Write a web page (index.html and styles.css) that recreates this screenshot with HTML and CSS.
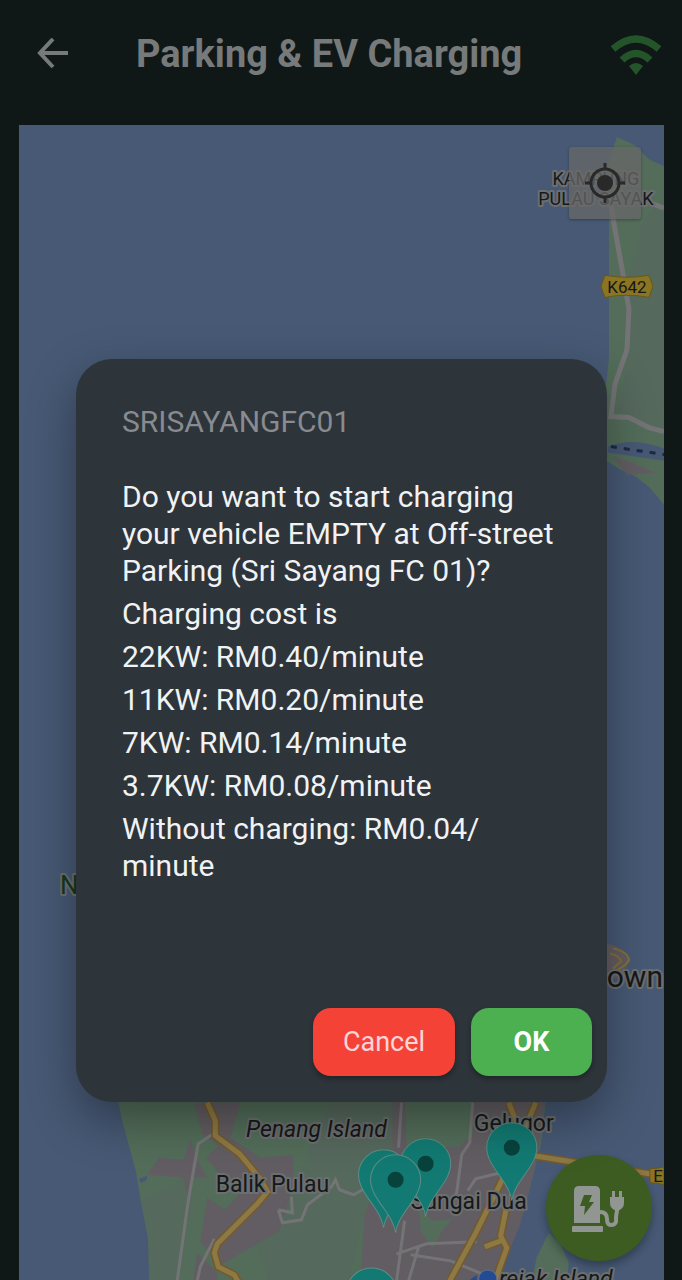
FILE: index.html
```html
<!DOCTYPE html>
<html lang="en">
<head>
  <meta charset="UTF-8">
  <meta name="viewport" content="width=device-width, initial-scale=1.0">
  <title>Parking &amp; EV Charging</title>
  <link rel="stylesheet" href="styles.css">
</head>
<body>
  <header class="app-bar">
    <button class="icon-btn" aria-label="Back">
      <svg width="32" height="32" viewBox="0 0 32 32" fill="none" stroke="#777a7a" stroke-width="4">
        <path d="M31 15H4M16 1L3 15l13 14"/>
      </svg>
    </button>
    <h1>Parking &amp; EV Charging</h1>
    <svg class="wifi" width="52" height="44" viewBox="0 0 52 44" fill="none" stroke="#24552a" stroke-width="7">
      <path d="M3 17Q26-3 49 17"/>
      <path d="M12 28Q26 15 40 28"/>
      <path d="M26 43l-7-9q7-6 14 0z" fill="#24552a" stroke="none"/>
    </svg>
  </header>

  <main class="map">
    <svg class="map-canvas" viewBox="19 125 644 1155" preserveAspectRatio="xMidYMid slice">
      <defs>
        <g id="pin">
          <path d="M0 53C-2 34-25 19-25 0A25 25 0 0 1 25 0C25 19 2 34 0 53z" fill="#127a72" stroke="#5e8c86" stroke-width="1"/>
          <circle r="8" fill="#08423d"/>
        </g>
      </defs>

      <!-- Kampung Pulau Sayak coast -->
      <path class="land" d="M616 138l18 8 14 14 15 7v338l-14-17-14-11-15-7-20-12V430l8-70V210l-2-42z"/>
      <path class="land-alt" d="M626 290l3 60-12 62 20 10 26 8V200l-20 20z"/>
      <path class="water" d="M607 447q25-10 56 2v12l-56-8z"/>
      <path class="urban" d="M612 457l20 6 22 10-28 2z"/>
      <path class="road road-wide" d="M610 205l4 25 9 50 5 30-2 40-12 35-4 32 18 1 20 10 15 4M640 200l23 9"/>
      <path class="ferry" d="M610 447l54 8"/>

      <!-- George Town tip -->
      <path class="urban" d="M600 942q24 4 29 16-3 13-15 20h-14z"/>
      <path class="highway-edge" d="M612 948q16 4 16 12-4 6-11 9M609 953q11 3 11 8l-8 7"/>

      <!-- Penang Island -->
      <path class="land" d="M116 1090l6 30 14 52 4 25 8 42 1 41h332l14-14 18-28 9-24 9-34 9-36 6-54z"/>
      <path class="land-alt" d="M330 1102h70l-2 50-30 40-20 88h-80l-15-45 40-40 20-60z"/>
      <path class="land-alt" d="M142 1200l40-22 12 10-20 92h-25l-1-41z"/>
      <path class="urban" d="M194 1102h46l-10 35 30 20 33-3v30l-14 46-58 34-21-23 7-44 17 12 14-14-32-38 12-12-16-12z"/>
      <path class="urban" d="M147 1174l12-17 24 2 7-21 6 20 11 19H192l-6 14-3-14z"/>
      <path class="urban" d="M197 1252l20 20v8h-24z"/>
      <path class="urban" d="M392 1090h12l2 56h52l14-12 2-44h72l-9 65-9 36-9 34-10 24-18 28-8 3H360l4-66 14-40 14-10z"/>
      <path class="land" d="M418 1208l14 12 20-2-12 14-8 16-12-18z"/>
      <path class="land" d="M548 1232l12 12 8 18-2 18h-35l5-24z"/>
      <path class="water" d="M139 1178l8-3-1 5-6 2z"/>

      <path class="road" d="M213 1133l-15 10-4 22-7 42-10 73M214 1238l-14 28-3 14"/>
      <path class="road" d="M278 1209l14 3-1-16M278 1209l4 13 19-3 6-15 24-18 4-7 4 10 14 5 9-5"/>
      <path class="road" d="M401 1102l-3 45M472 1102l-3 40-8 12-5 38-10 18M404 1220l-8 60M396 1253l30-10 50-2M410 1254l40 6 34 14M418 1246l-10 34M500 1172l-25 6-8 12"/>

      <path class="highway-case" d="M207 1102l8 18 0 15 24 18 20 24 8 14-10 12-40 40-3 9 4 14 16 8 12 22 6 8"/>
      <path class="highway" d="M207 1102l8 18 0 15 24 18 20 24 8 14-10 12-40 40-3 9 4 14 16 8 12 22 6 8"/>
      <path class="highway-case" d="M535 1102l-30 70-30 60-27 50M508 1102l8 20M506 1205l-6 30 6 12-12 34M500 1240l-16 6"/>
      <path class="highway" d="M535 1102l-30 70-30 60-27 50M508 1102l8 20M506 1205l-6 30 6 12-12 34M500 1240l-16 6"/>
      <path class="highway-case" d="M533 1155l50 8 65 10 15 1"/>
      <path class="highway" d="M533 1155l50 8 65 10 15 1"/>

      <!-- Road shields -->
      <path class="shield" d="M604 276q22 4 44 0l4 11-4 11q-22-4-44 0l-4-11z"/>
      <text class="label road-no" x="626" y="294">K642</text>
      <path class="shield" d="M649 1168q8 0 14-2v18q-6-2-14-2z"/>
      <text class="label road-no" x="657" y="1181">E</text>

      <text class="label district" x="595" y="186">KAMPUNG</text>
      <text class="label district" x="595" y="206">PULAU SAYAK</text>
      <text class="label park" x="60" y="894">N</text>
      <text class="label city" x="662" y="987">own</text>
      <text class="label island" x="316" y="1136">Penang Island</text>
      <text class="label town" x="272" y="1191">Balik Pulau</text>
      <text class="label town" x="513" y="1130">Gelugor</text>
      <text class="label town" x="468" y="1208">Sungai Dua</text>
      <text class="label island" x="555" y="1286">rejak Island</text>

      <use href="#pin" x="425" y="1163"/>
      <use href="#pin" x="383" y="1174"/>
      <use href="#pin" x="395" y="1179"/>
      <use href="#pin" x="511" y="1147"/>
      <use href="#pin" x="371" y="1292"/>
      <path d="M468 1280l8-6v6z" fill="#234a94"/>
      <circle cx="487" cy="1278" r="9" fill="#234a94" stroke="#647089"/>
    </svg>

    <button class="locate-btn" aria-label="My location">
      <svg width="40" height="40" viewBox="0 0 40 40" fill="none" stroke="#292929" stroke-width="3">
        <circle cx="20" cy="20" r="14"/>
        <path d="M20 0v7M20 33v7M0 20h7M33 20h7"/>
        <circle cx="20" cy="20" r="8" fill="#292929" stroke="none"/>
      </svg>
    </button>

    <button class="charge-btn" aria-label="Charging stations">
      <svg width="54" height="48" viewBox="0 0 54 48" fill="#929692">
        <path fill-rule="evenodd" d="M7 2h16q5 0 5 5v32H2V7q0-5 5-5zM12 11L8 22h5l-1 9 10-13h-5l3-7z"/>
        <rect x="0" y="42" width="31" height="6" rx="1"/>
        <path d="M28 28q7 0 7 7 0 6 4 6 6 0 5-7 0-3 1-7v-5" fill="none" stroke="#929692" stroke-width="4"/>
        <path d="M38 13h14v6q0 6-7 8-7-2-7-8zM40 7h3v6h-3zM47 7h3v6h-3z"/>
      </svg>
    </button>
  </main>

  <!-- Start charging confirmation -->
  <div class="overlay">
    <div class="dialog" role="dialog" aria-labelledby="dialogTitle">
      <h2 id="dialogTitle">SRISAYANGFC01</h2>
      <div class="dialog-body">
        <p>Do you want to start charging your vehicle EMPTY at Off-street Parking (Sri Sayang FC 01)?</p>
        <p>Charging cost is</p>
        <p>22KW: RM0.40/minute</p>
        <p>11KW: RM0.20/minute</p>
        <p>7KW: RM0.14/minute</p>
        <p>3.7KW: RM0.08/minute</p>
        <p>Without charging: RM0.04/<wbr>minute</p>
      </div>
      <div class="dialog-actions">
        <button class="btn btn-cancel">Cancel</button>
        <button class="btn btn-ok">OK</button>
      </div>
    </div>
  </div>
</body>
</html>
```
FILE: styles.css
```css
* {
  box-sizing: border-box;
}
body {
  display: flex;
  flex-direction: column;
  min-height: 100vh;
  margin: 0;
  background: #101817;
  font-family: Roboto, "Liberation Sans", sans-serif;
}
h1, h2, p {
  margin: 0;
}
button {
  padding: 0;
  border: none;
  font-family: inherit;
  cursor: pointer;
}

/* App bar */
.app-bar {
  display: flex;
  align-items: center;
  height: 125px;
  padding: 0 20px 18px 37px;
}
.icon-btn {
  display: flex;
  background: none;
}
.app-bar h1 {
  flex: 1;
  padding-left: 67px;
  color: #777a7a;
  font-size: 38px;
  font-weight: 700;
}

/* Map */
.map {
  position: relative;
  flex: 1;
  margin: 0 18px 0 19px;
  overflow: hidden;
  background: #475975;
}
.map-canvas {
  position: absolute;
  width: 100%;
  height: 100%;
}
.water {
  fill: #475975;
}
.land {
  fill: #536d5a;
}
.land-alt {
  fill: #56695d;
}
.urban {
  fill: #625d62;
}
.road {
  fill: none;
  stroke: #747476;
  stroke-width: 3;
}
.road-wide {
  stroke-width: 5;
}
.ferry {
  fill: none;
  stroke: #1c2a42;
  stroke-width: 3;
  stroke-dasharray: 6 7;
}
.highway-case {
  fill: none;
  stroke: #76592b;
  stroke-width: 8;
}
.highway {
  fill: none;
  stroke: #8c7944;
  stroke-width: 5;
}
.highway-edge {
  fill: none;
  stroke: #84713a;
  stroke-width: 2;
}
.shield {
  fill: #8a7522;
  stroke: #6a571c;
}
.label {
  fill: #171819;
  stroke: #6c6f70;
  stroke-width: 4px;
  stroke-linejoin: round;
  paint-order: stroke;
  text-anchor: middle;
}
.district {
  font-size: 18px;
}
.road-no {
  font-size: 17px;
  stroke: none;
}
.town {
  font-size: 23px;
}
.island {
  font-size: 23px;
  font-style: italic;
}
.city {
  font-size: 30px;
  text-anchor: end;
}
.park {
  fill: #15381f;
  font-size: 26px;
  text-anchor: start;
}
.locate-btn {
  position: absolute;
  top: 22px;
  right: 23px;
  display: grid;
  place-items: center;
  width: 72px;
  height: 72px;
  border-radius: 3px;
  background: rgba(103, 103, 103, 0.75);
  box-shadow: 0 1px 3px rgba(0, 0, 0, 0.3);
}
.charge-btn {
  position: absolute;
  right: 12px;
  bottom: 19px;
  display: grid;
  place-items: center;
  width: 106px;
  height: 106px;
  border-radius: 50%;
  background: #3d5c22;
  box-shadow: 0 5px 9px rgba(0, 0, 0, 0.3);
}

/* Dialog */
.overlay {
  position: absolute;
  inset: 0;
  padding: 359px 75px 178px 76px;
}
.dialog {
  display: flex;
  flex-direction: column;
  min-height: 100%;
  padding: 44px 15px 26px 46px;
  border-radius: 36px;
  background: #2d343a;
  box-shadow: 0 18px 48px rgba(0, 0, 0, 0.35);
}
.dialog h2 {
  color: #888b8f;
  font-size: 30px;
  font-weight: 400;
  line-height: 38px;
}
.dialog-body {
  display: flex;
  flex: 1;
  flex-direction: column;
  gap: 6px;
  padding: 37px 31px 0 0;
  color: #f0f2f3;
  font-size: 30px;
  line-height: 37px;
}
.dialog-actions {
  display: flex;
  justify-content: flex-end;
  gap: 16px;
}
.btn {
  height: 68px;
  border-radius: 18px;
  color: #fff;
  font-size: 27px;
  box-shadow: 0 3px 5px rgba(0, 0, 0, 0.3);
}
.btn-cancel {
  width: 142px;
  background: #f44336;
  color: #fbd5d8;
}
.btn-ok {
  width: 121px;
  background: #4caf50;
  font-weight: 700;
}
```
